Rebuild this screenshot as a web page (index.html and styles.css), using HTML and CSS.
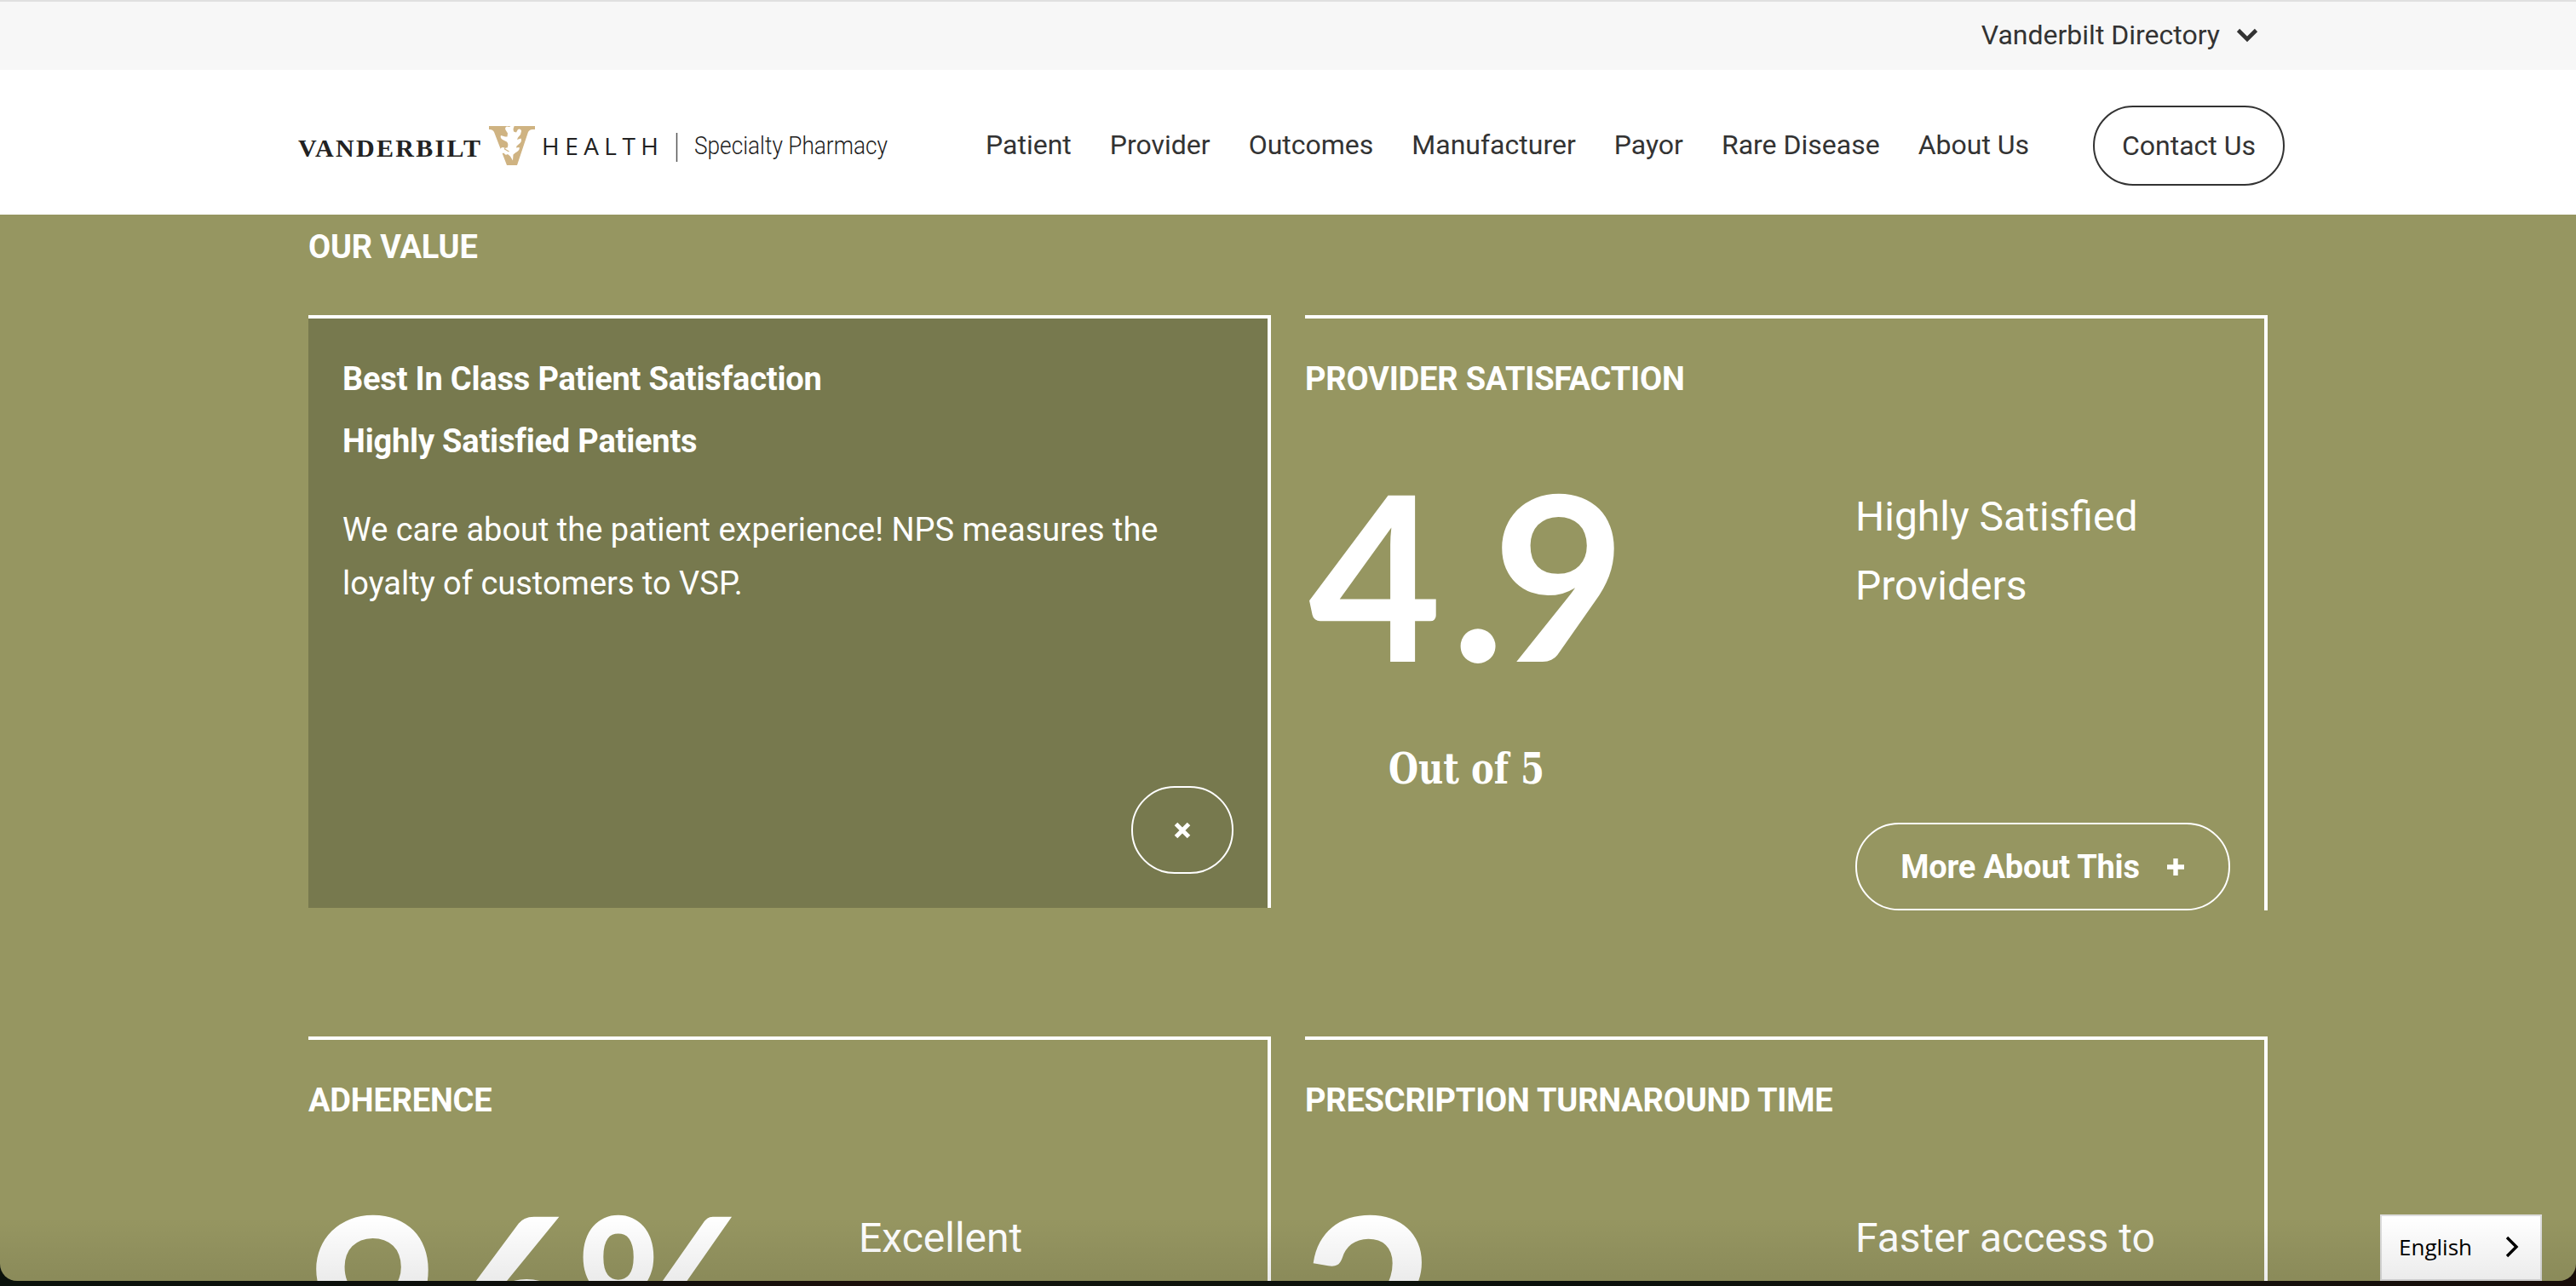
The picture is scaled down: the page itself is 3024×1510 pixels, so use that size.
FILE: index.html
```html
<!DOCTYPE html>
<html lang="en">
<head>
<meta charset="utf-8">
<title>Vanderbilt Health Specialty Pharmacy</title>
<link rel="stylesheet" href="styles.css">
</head>
<body>
<div class="window">
  <div class="topbar">
    <span>Vanderbilt Directory</span>
    <svg class="chev" width="26" height="18" viewBox="0 0 26 18"><path d="M2.500 3.500 13 14 23.500 3.500" fill="none" stroke="#333" stroke-width="4.6"/></svg>
  </div>
  <header class="header">
    <svg class="logo" width="700" height="60" viewBox="350 140 700 60">
      <text class="logo-serif" x="350" y="184" textLength="214" lengthAdjust="spacing">VANDERBILT</text>
      <path fill="#cfb382" d="M574 148h54v4h-3c-2 0-4 1-5 3l-13 39h-12l-15-39c-1-2-3-3-5-3h-1z"/>
      <path fill="#fff" d="M598 147h6l-1.500 4.500.500 3 3 1 2-3.500c2-1.500 4 0 4 2l-1 4-3 3.500-1 2.500 4.500-1.500c1 2 .5 4-1 5.500l-4 3.500-.5 2 3.500-.5c1 2-1 4.500-4 6l-3 2.500-.5 7-3-5-3-2.500c-2 1.500-4 .5-4-1.500-2 1.500-5 0-5-3s3-4.500 5-3l3.500 0c1-2 1.500-5-.5-7l-5-2.500c-2-1-3-3.500-2-5l5 1.500 2.500 0 .5-4-2.500-4c-1-2 0-3.500 1.500-4l3 .5 1.500-1z"/>
      <path fill="none" stroke="#cfb382" stroke-width="1.200" d="M594 170.500l-1.500 4.500 5 3"/>
      <text class="logo-sans" x="636" y="182" textLength="137" lengthAdjust="spacing">HEALTH</text>
      <path d="M794.500 156v34" stroke="#555" stroke-width="1.500"/>
      <text class="logo-light" x="815" y="181" textLength="227" lengthAdjust="spacingAndGlyphs">Specialty Pharmacy</text>
    </svg>
    <nav class="nav">
      <a>Patient</a><a>Provider</a><a>Outcomes</a><a>Manufacturer</a><a>Payor</a><a>Rare Disease</a><a>About Us</a>
    </nav>
    <a class="contact">Contact Us</a>
  </header>
  <main class="value">
    <h2 class="title">OUR VALUE</h2>
    <div class="grid">
      <section class="card open">
        <h3>Best In Class Patient Satisfaction</h3>
        <h3 class="sub">Highly Satisfied Patients</h3>
        <p>We care about the patient experience! NPS measures the loyalty of customers to VSP.</p>
        <a class="close"><svg width="20" height="20" viewBox="0 0 20 20"><path d="M2.500 2.500l15 15M17.500 2.500l-15 15" stroke="#fff" stroke-width="5"/></svg></a>
      </section>
      <section class="card">
        <h3>PROVIDER SATISFACTION</h3>
        <div class="stat">
          <div class="figure">
            <svg class="num" width="420" height="400" viewBox="0 0 420 400"><text x="4 171 220" y="227">4.9</text><text class="out" x="98" y="370" textLength="183" lengthAdjust="spacingAndGlyphs">Out of 5</text></svg>
          </div>
          <div class="detail">
            <p>Highly Satisfied<br>Providers</p>
            <a class="more">More About This<svg width="22" height="22" viewBox="0 0 22 22"><path d="M11 1v20M1 11h20" stroke="#fff" stroke-width="5.400"/></svg></a>
          </div>
        </div>
      </section>
      <section class="card">
        <h3>ADHERENCE</h3>
        <div class="stat">
          <div class="figure"><svg class="num" width="560" height="400" viewBox="0 0 560 400"><text x="-2 166" y="227">96<tspan x="313" textLength="203" lengthAdjust="spacingAndGlyphs">%</tspan></text></svg></div>
          <div class="detail"><p>Excellent</p></div>
        </div>
      </section>
      <section class="card">
        <h3>PRESCRIPTION TURNAROUND TIME</h3>
        <div class="stat">
          <div class="figure"><svg class="num" width="420" height="400" viewBox="0 0 420 400"><text x="-4" y="227">2</text></svg></div>
          <div class="detail"><p>Faster access to</p></div>
        </div>
      </section>
    </div>
  </main>
  <a class="lang"><span>English</span><svg width="18" height="28" viewBox="0 0 18 28"><path d="M3 3l11 11L3 25" fill="none" stroke="#000" stroke-width="3.400"/></svg></a>
  <div class="shade"></div>
</div>
</body>
</html>
```
FILE: styles.css
```css
* { box-sizing: border-box; }
body {
  margin: 0;
  height: 1510px;
  overflow: hidden;
  background: linear-gradient(90deg, #0b120c, #0d0f0c 20%, #1c0f0b 34%, #12150d 38%, #0a100b 60%, #14130e 80%, #170d09);
  font-family: Roboto, "Liberation Sans", sans-serif;
}
.window {
  position: relative;
  height: 1504px;
  overflow: hidden;
  border-radius: 0 0 20px 20px;
  background: #969661;
}
.topbar {
  display: flex;
  align-items: center;
  justify-content: flex-end;
  gap: 19px;
  height: 82px;
  padding: 0 373px 2px 0;
  border-top: 2px solid #e0e0e0;
  background: #f7f7f7;
  color: #333;
  font-size: 32px;
}
.header {
  display: flex;
  align-items: center;
  height: 170px;
  padding: 0 342px 0 350px;
  background: #fff;
}
.logo { flex: none; margin-top: 6px; overflow: visible; }
.logo-serif { font: bold 30px "Liberation Serif", serif; fill: #222; }
.logo-sans { font: 28px "Open Sans", sans-serif; fill: #222; }
.logo-light { font: 300 29px Roboto, sans-serif; fill: #222; }
.nav {
  display: flex;
  gap: 45px;
  margin: 5px 0 0 107px;
  color: #333;
  font-size: 32px;
  white-space: nowrap;
}
.contact {
  display: flex;
  align-items: center;
  justify-content: center;
  width: 225px;
  height: 94px;
  margin: 8px 0 0 auto;
  border: 2px solid #333;
  border-radius: 47px;
  color: #333;
  font-size: 32px;
}
.value {
  width: 2300px;
  margin: 0 auto;
  color: #fff;
}
.title, h3 {
  margin: 0;
  font-size: 38px;
  font-weight: 700;
  letter-spacing: -0.2px;
  line-height: 60px;
}
.title { padding-top: 8px; height: 118px; }
.grid {
  display: grid;
  grid-template-columns: 1130px 1130px;
  grid-template-rows: 699px 699px;
  column-gap: 40px;
  row-gap: 148px;
}
.card {
  display: flex;
  flex-direction: column;
  border-top: 4px solid #fff;
  border-right: 4px solid #fff;
  padding-top: 41px;
}
.card.open {
  height: 696px;
  padding: 41px 40px 40px;
  background: #77794e;
}
.card.open .sub { margin-top: 13px; }
.card.open p {
  margin: 43px 0 0;
  font-size: 38px;
  line-height: 63px;
}
.close {
  display: flex;
  align-items: center;
  justify-content: center;
  align-self: flex-end;
  width: 120px;
  height: 103px;
  margin-top: auto;
  border: 2px solid #fff;
  border-radius: 51px;
}
.stat { display: flex; flex: 1; }
.figure { width: 646px; padding-top: 75px; }
.num { display: block; overflow: visible; }
.num text { font: 700 270px Lato, "Open Sans", sans-serif; fill: #fff; }
.num .out { font: bold 50px "DejaVu Serif Condensed", "DejaVu Serif", serif; }
.detail {
  display: flex;
  flex-direction: column;
  width: 440px;
}
.detail p {
  margin: 91px 0 0;
  font-size: 48px;
  line-height: 81px;
}
.more {
  display: flex;
  align-items: center;
  justify-content: center;
  gap: 31px;
  height: 103px;
  margin-top: auto;
  border: 2px solid #fff;
  border-radius: 51px;
  font-size: 38px;
  font-weight: 700;
  letter-spacing: -0.2px;
  white-space: nowrap;
}
.lang {
  position: absolute;
  right: 40px;
  bottom: 0;
  display: flex;
  align-items: center;
  justify-content: space-between;
  width: 190px;
  height: 78px;
  padding: 0 24px 2px 20px;
  border: 2px solid #ddd;
  background: #fff;
  color: #000;
  font: 26px "Open Sans", sans-serif;
}
.shade {
  position: absolute;
  inset: auto 0 0 0;
  height: 75px;
  background: linear-gradient(to bottom, transparent, rgba(0, 0, 0, .08));
}
```
